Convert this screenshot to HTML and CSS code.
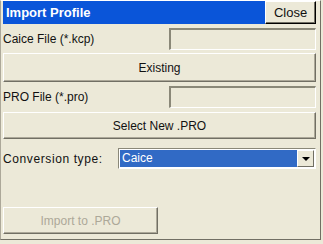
FILE: index.html
```html
<!DOCTYPE html>
<html lang="en">
<head>
    <meta charset="UTF-8">
    <title>Import Profile</title>
    <link rel="stylesheet" href="styles.css">
</head>
<body>
    <div class="window">
        <div class="title-bar">
            <span class="title">Import Profile</span>
            <button class="close-btn">Close</button>
        </div>

        <div class="field-row first">
            <label class="field-label">Caice File (*.kcp)</label>
            <div class="text-field"></div>
        </div>
        <button class="btn btn-existing">Existing</button>

        <div class="field-row">
            <label class="field-label">PRO File (*.pro)</label>
            <div class="text-field"></div>
        </div>
        <button class="btn btn-select">Select New .PRO</button>

        <div class="select-row">
            <label class="field-label conv-label">Conversion type:</label>
            <div class="combo">
                <div class="combo-value">Caice</div>
                <div class="combo-arrow"><span class="arrow"></span></div>
            </div>
        </div>

        <button class="btn btn-import" disabled>Import to .PRO</button>
    </div>
</body>
</html>
```

FILE: styles.css
```css
* {
    margin: 0;
    padding: 0;
    box-sizing: border-box;
    font-family: 'Liberation Sans', Arial, sans-serif;
}

:root {
    --face: #ece9d8;
    --shadow: #716f64;
    --mid: #aca899;
    --blue: #0a55d9;
    --select: #316ac5;
}

body {
    background: var(--face);
    width: 323px;
    height: 244px;
}

.window {
    width: 321px;
    height: 240px;
    background: var(--face);
    border: 1px solid;
    border-color: #fff var(--shadow) var(--shadow) var(--mid);
    padding: 0 4px 0 2px;
    display: flex;
    flex-direction: column;
}

.title-bar {
    height: 23px;
    background: var(--blue);
    display: flex;
    align-items: center;
    justify-content: space-between;
    padding-left: 3px;
}

.title {
    color: #fff;
    font-weight: bold;
    font-size: 13px;
}

.close-btn {
    width: 51px;
    height: 23px;
    background: var(--face);
    border: 1px solid;
    border-color: #fff #000 #000 #fff;
    box-shadow: inset -1px -1px var(--shadow);
    font-size: 13px;
    color: #111;
}

.field-row {
    display: flex;
    justify-content: space-between;
    align-items: center;
    height: 22px;
    margin-top: 4px;
}

.field-label {
    font-size: 12px;
    color: #111;
}

.conv-label {
    letter-spacing: 0.6px;
}

.text-field {
    width: 147px;
    height: 22px;
    border-style: solid;
    border-width: 2px 1px 1px 2px;
    border-color: #8a8878 #fff #fff #8a8878;
    background: var(--face);
}

.btn {
    background: var(--face);
    border: 1px solid;
    border-color: #fff var(--shadow) var(--shadow) #fff;
    box-shadow: inset -1px -1px var(--mid);
    font-size: 12px;
    color: #111;
}

.btn-existing {
    height: 29px;
    margin-top: 3px;
}

.btn-select {
    height: 27px;
    margin-top: 4px;
}

.select-row {
    display: flex;
    align-items: center;
    justify-content: space-between;
    height: 21px;
    margin-top: 9px;
}

.combo {
    width: 198px;
    height: 21px;
    display: flex;
    border-style: solid;
    border-width: 1px;
    border-color: #8a8878 #fff #fff #8a8878;
    background: #fff;
    padding: 1px;
}

.combo-value {
    flex: 1;
    background: var(--select);
    color: #fff;
    font-size: 12px;
    line-height: 17px;
    padding-left: 2px;
}

.combo-arrow {
    width: 17px;
    background: var(--face);
    border: 1px solid;
    border-color: #fff var(--shadow) var(--shadow) #fff;
    display: flex;
    align-items: center;
    justify-content: center;
}

.arrow {
    width: 0;
    height: 0;
    border-left: 4px solid transparent;
    border-right: 4px solid transparent;
    border-top: 4px solid #000;
}

.btn-import {
    width: 155px;
    height: 27px;
    margin-top: 38px;
    color: var(--mid);
}
```
